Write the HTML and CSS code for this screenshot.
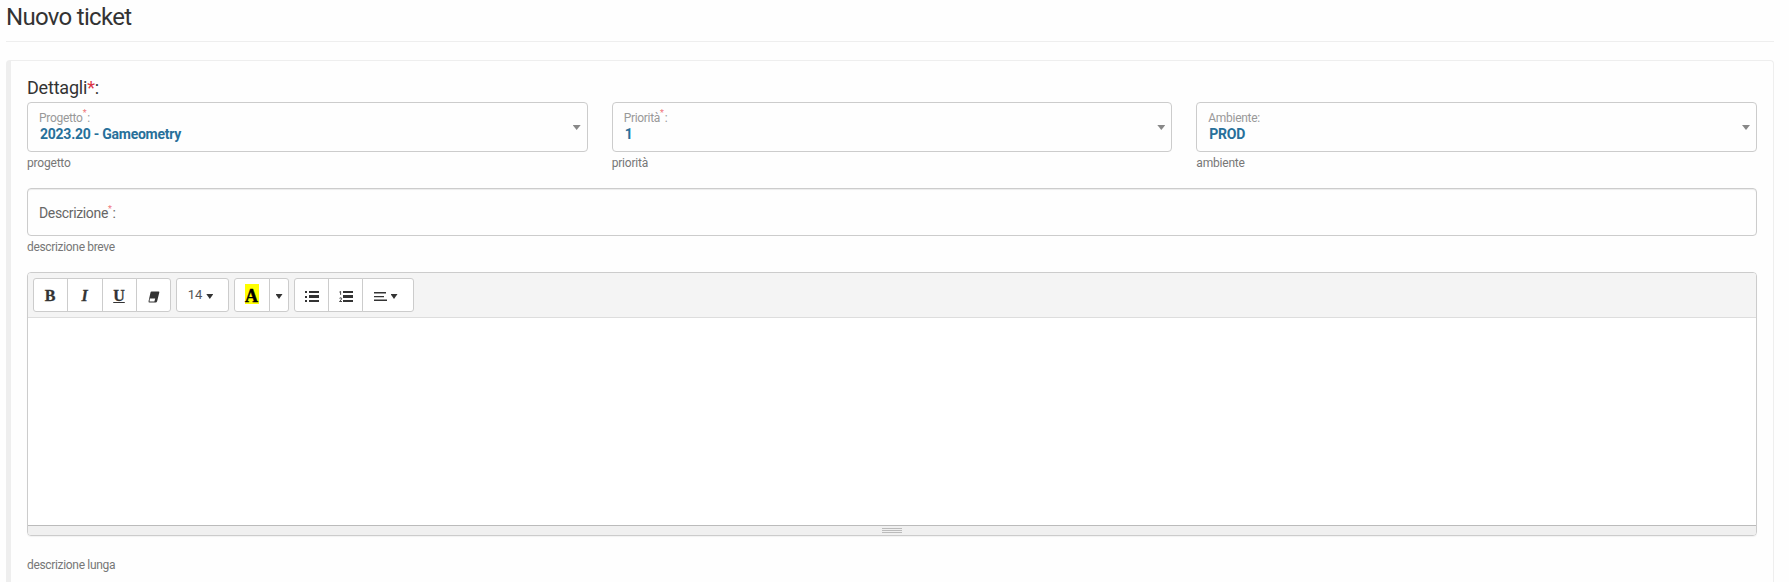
FILE: index.html
```html
<!DOCTYPE html>
<html lang="it">
<head>
<meta charset="utf-8">
<title>Nuovo ticket</title>
<link rel="stylesheet" href="styles.css">
</head>
<body>
<h1 class="page-title">Nuovo ticket</h1>
<main class="card">
  <h2 class="section-title">Dettagli<span class="required">*</span>:</h2>
  <div class="row">
    <div>
      <div class="select"><div><div class="label">Progetto<sup>*</sup>:</div><div class="value">2023.20 - Gameometry</div></div><i class="arrow"></i></div>
      <div class="help">progetto</div>
    </div>
    <div>
      <div class="select"><div><div class="label">Priorità<sup>*</sup>:</div><div class="value">1</div></div><i class="arrow"></i></div>
      <div class="help">priorità</div>
    </div>
    <div>
      <div class="select"><div><div class="label">Ambiente:</div><div class="value">PROD</div></div><i class="arrow"></i></div>
      <div class="help">ambiente</div>
    </div>
  </div>
  <div class="input">Descrizione<sup>*</sup>:</div>
  <div class="help tight">descrizione breve</div>
  <div class="editor">
    <div class="toolbar">
      <div class="group">
        <button class="btn w35 bold">B</button><button class="btn w36 italic">I</button><button class="btn w35 under">U</button><button class="btn w35"><svg width="12" height="12" viewBox="0 0 12 12"><path d="M3.6.5h7q1 0 .7 1L9.200 10q-.4 1.500-1.800 1.500H1.500Q.2 11.500.6 10L2.500 1.500Q2.700.5 3.600.5z" fill="#333"/><path d="M1.900 7.500h5.300L6.400 10.500H1.500z" fill="#fff"/></svg></button>
      </div>
      <div class="group">
        <button class="btn w53"><span class="size">14</span><i class="caret"></i></button>
      </div>
      <div class="group">
        <button class="btn w36"><span class="mark">A</span></button><button class="btn w20"><i class="caret"></i></button>
      </div>
      <div class="group">
        <button class="btn w35"><svg width="14" height="12" viewBox="0 0 14 12" fill="#333"><path d="M0 0h2v2H0zM0 5h2v2H0zM0 9h2v2H0zM4 0h10v2H4zM4 4h10v3H4zM4 9h10v2H4z"/></svg></button><button class="btn w35"><svg width="14" height="12" viewBox="0 0 14 12" fill="#333"><path d="M4 0h10v2H4zM4 4h10v3H4zM4 9h10v2H4z"/><path d="M.4 1.100 1.600.4v3.400M.5 7.300Q2.700 6 2.600 7.700 2.500 8.700.5 10.500h2.500" fill="none" stroke="#333" stroke-width=".9"/></svg></button><button class="btn w52"><svg width="13" height="11" viewBox="0 0 13 11" fill="#333"><path d="M0 1h12v1.500H0zM0 5h10v1.200H0zM0 8.500h13V10H0z"/></svg><i class="caret"></i></button>
      </div>
    </div>
    <div class="editable"></div>
    <div class="statusbar"><i class="grip"></i></div>
  </div>
  <div class="help tight">descrizione lunga</div>
</main>
</body>
</html>
```
FILE: styles.css
```css
* { box-sizing: border-box; }
html { height: 100%; overflow: hidden; }
body { margin: 0; padding: 0 15px 0 6px; height: 100%; overflow: hidden; background: #fefefe; color: #333; font-family: Roboto, "Noto Sans", sans-serif; }
.page-title { margin: 0 0 18px; height: 42px; border-bottom: 1px solid #eee; font-size: 24px; font-weight: 400; line-height: 34px; letter-spacing: -.7px; }
.card { height: 522px; border: 1px solid #eee; border-left-width: 5px; border-bottom: 0; border-radius: 4px 4px 0 0; padding: 15px 16px 0; }
.section-title { margin: 0; height: 26px; line-height: 24px; font-size: 18px; font-weight: 400; letter-spacing: -.2px; }
.required { color: #dc3545; }
.row { display: grid; grid-template-columns: repeat(3, 1fr); gap: 24px; }
.select { display: flex; justify-content: space-between; height: 50px; border: 1px solid #ccc; border-radius: 4px; padding: 7px 6px 0 11px; }
.label { height: 16px; line-height: 17px; font-size: 12px; letter-spacing: -.3px; color: #999; }
.value { height: 17px; line-height: 17px; padding-left: 1px; font-size: 14px; font-weight: 700; letter-spacing: -.25px; color: #27709a; }
sup { margin-right: 1px; font-size: 9px; line-height: 0; vertical-align: 6px; color: #f0777c; }
.arrow { margin-top: 15px; width: 8px; height: 5px; background: #888; clip-path: polygon(0 0, 100% 0, 50% 100%); }
.help { height: 18px; margin-top: 2px; line-height: 18px; font-size: 12px; letter-spacing: -.2px; color: #777; }
.tight { letter-spacing: -.33px; }
.input { margin-top: 16px; height: 48px; border: 1px solid #ccc; border-radius: 4px; padding: 0 11px; font-size: 14px; line-height: 49px; letter-spacing: -.35px; color: #666; box-shadow: inset 0 1px 1px rgba(0,0,0,.075); }
.editor { margin: 16px 0 20px; height: 264px; display: flex; flex-direction: column; border: 1px solid #ccc; border-radius: 4px; overflow: hidden; box-shadow: 0 1px 1px rgba(0,0,0,.05); }
.toolbar { display: flex; gap: 5px; height: 45px; padding: 5px; border-bottom: 1px solid #ddd; background: #f4f4f4; }
.group { display: flex; height: 34px; }
.btn { display: flex; align-items: center; justify-content: center; height: 34px; padding: 3px 0 0; border: 1px solid #ccc; background: #fff; color: #333; font-family: "Liberation Serif", serif; font-size: 16px; line-height: 20px; }
.btn + .btn { margin-left: -1px; }
.btn:first-child { border-radius: 3px 0 0 3px; }
.btn:last-child { border-radius: 0 3px 3px 0; }
.btn:only-child { border-radius: 3px; }
.w20 { width: 20px; }
.w35 { width: 35px; }
.w36 { width: 36px; }
.w52 { width: 52px; padding-right: 5px; }
.w53 { width: 53px; padding-right: 4px; }
.bold, .under, .italic { padding: 2px 1px 0 0; font-weight: 700; -webkit-text-stroke: .3px #333; }
.italic { font-style: italic; }
.under { text-decoration: underline; text-decoration-thickness: 1px; text-underline-offset: 1px; }
.size { margin-top: -3px; font-family: Roboto, sans-serif; font-size: 13px; color: #555; }
.caret { width: 7px; height: 5px; background: #333; clip-path: polygon(0 0, 100% 0, 50% 100%); }
.size + .caret, svg + .caret { margin-left: 4px; }
.mark { width: 14px; height: 20px; margin: -6px 0 0 -1px; line-height: 25px; background: #ff0; color: #000; font-size: 18px; font-weight: 700; text-align: center; -webkit-text-stroke: .4px #000; }
.editable { flex: 1; background: #fff; }
.statusbar { height: 10px; border-top: 1px solid #bbb; background: #f0f0f0; }
.grip { display: block; width: 20px; height: 5px; margin: 2px auto; background: repeating-linear-gradient(#bbb 0 1px, #f0f0f0 1px 2px); }
```
